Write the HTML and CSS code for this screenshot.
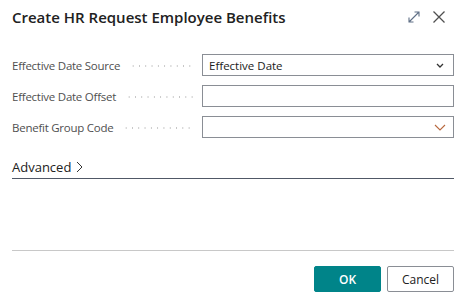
FILE: index.html
```html
<!DOCTYPE html>
<html>
<head>
<meta charset="utf-8">
<link rel="stylesheet" href="styles.css">
</head>
<body>
<div class="dialog">
  <div class="header">
    <h1 class="title">Create HR Request Employee Benefits</h1>
    <div class="header-icons">
      <svg class="icon" width="14" height="14" viewBox="0 0 14 14">
        <path d="M2 12 L12 2 M7.5 2 H12 V6.5 M2 7.5 V12 H6.5" fill="none" stroke="#5f6f86" stroke-width="1.1"/>
      </svg>
      <svg class="icon" width="14" height="14" viewBox="0 0 14 14">
        <path d="M1.5 1.5 L12.5 12.5 M12.5 1.5 L1.5 12.5" fill="none" stroke="#505050" stroke-width="1.3"/>
      </svg>
    </div>
  </div>
  <div class="fields">
    <div class="row">
      <label class="label">Effective Date Source</label>
      <span class="leader"></span>
      <div class="control">
        <span class="value">Effective Date</span>
        <svg class="chev-small" width="8" height="5" viewBox="0 0 8 5"><path d="M1 1 L4 4 L7 1" fill="none" stroke="#333" stroke-width="1.3"/></svg>
      </div>
    </div>
    <div class="row">
      <label class="label">Effective Date Offset</label>
      <span class="leader"></span>
      <div class="control"></div>
    </div>
    <div class="row">
      <label class="label">Benefit Group Code</label>
      <span class="leader"></span>
      <div class="control">
        <span class="value"></span>
        <svg class="chev-large" width="12" height="7" viewBox="0 0 12 7"><path d="M1 1 L6 6 L11 1" fill="none" stroke="#b8693f" stroke-width="1.1"/></svg>
      </div>
    </div>
  </div>
  <div class="advanced">
    <span class="adv-text">Advanced</span>
    <svg class="adv-chev" width="7" height="12" viewBox="0 0 7 12"><path d="M1 1 L6 6 L1 11" fill="none" stroke="#333" stroke-width="1"/></svg>
  </div>
  <div class="spacer"></div>
  <div class="footer">
    <button class="btn btn-primary">OK</button>
    <button class="btn btn-secondary">Cancel</button>
  </div>
</div>
</body>
</html>
```

FILE: styles.css
```css
* { box-sizing: border-box; }
html, body { margin: 0; padding: 0; background: #fff; }
body {
  font-family: "Open Sans", "Noto Sans", sans-serif;
  color: #212121;
  width: 466px;
  height: 299px;
  overflow: hidden;
}
.dialog {
  display: flex;
  flex-direction: column;
  height: 299px;
  padding: 0 12px;
}
.header {
  display: flex;
  align-items: center;
  justify-content: space-between;
  height: 32px;
  padding-top: 1px;
}
.title {
  margin: 0;
  font-size: 15px;
  font-weight: 600;
  color: #212121;
  letter-spacing: 0;
}
.header-icons {
  display: flex;
  gap: 11px;
  margin-right: 8px;
}
.icon { display: block; }
.fields {
  display: flex;
  flex-direction: column;
  gap: 9px;
  margin-top: 22px;
}
.row {
  display: flex;
  align-items: center;
  height: 22px;
}
.label {
  font-size: 11.5px;
  color: #4f4f4f;
  white-space: nowrap;
  letter-spacing: -0.25px;
}
.leader {
  flex: 1;
  align-self: center;
  height: 2px;
  margin: 2px 9px 0 10px;
  background-image: radial-gradient(circle, #c4c4c4 0.7px, transparent 0.9px);
  background-size: 6.3px 2px;
  background-position: 0 center;
  background-repeat: repeat-x;
}
.control {
  width: 252px;
  height: 22px;
  border: 1px solid #8a8e95;
  display: flex;
  align-items: center;
  justify-content: space-between;
  padding: 0 8px 0 6px;
}
.value {
  font-size: 11.5px;
  color: #212121;
}
.chev-small { display: block; margin-right: 1px; }
.chev-large { display: block; margin-right: -1px; }
.advanced {
  display: flex;
  align-items: center;
  gap: 5px;
  margin-top: 19px;
  padding-bottom: 2px;
  border-bottom: 1px solid #505866;
  height: 22px;
}
.adv-text {
  font-size: 13px;
  color: #212121;
}
.adv-chev { display: block; }
.spacer { height: 71px; }
.footer {
  display: flex;
  justify-content: flex-end;
  gap: 6px;
  border-top: 1px solid #c8c8c8;
  padding-top: 15px;
}
.btn {
  font-family: "Open Sans", "Noto Sans", sans-serif;
  font-size: 12px;
  width: 67px;
  height: 26px;
  border-radius: 2px;
  cursor: pointer;
}
.btn-primary {
  background: #008489;
  border: 1px solid #008489;
  color: #fff;
  font-weight: 600;
}
.btn-secondary {
  background: #fff;
  border: 1px solid #8a8e95;
  color: #212121;
}
```
